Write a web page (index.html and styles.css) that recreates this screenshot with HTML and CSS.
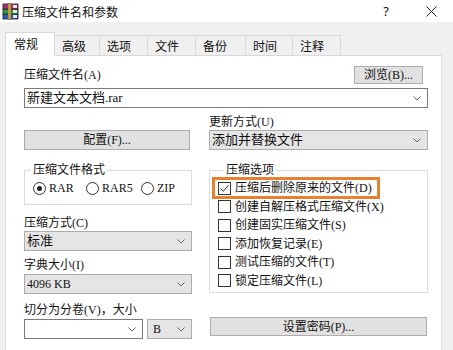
FILE: index.html
```html
<!DOCTYPE html>
<html lang="zh-CN">
<head>
    <meta charset="UTF-8">
    <title>压缩文件名和参数</title>
    <link rel="stylesheet" href="styles.css">
</head>
<body>
    <!-- Заголовок вікна -->
    <div class="titlebar">
        <svg class="app-icon" width="18" height="18" viewBox="0 0 18 18">
            <rect x="1" y="12" width="15" height="5" fill="#2f5cb8" stroke="#1a1a3a" stroke-width="0.8"/>
            <rect x="11" y="13" width="4" height="3" fill="#e8e8e8"/>
            <rect x="1" y="7" width="15" height="5" fill="#2e9a44" stroke="#12321a" stroke-width="0.8"/>
            <rect x="11" y="8" width="4" height="3" fill="#e8e8e8"/>
            <rect x="1" y="2" width="15" height="5" fill="#a3307a" stroke="#3a1030" stroke-width="0.8"/>
            <rect x="11" y="3" width="4" height="3" fill="#e8e8e8"/>
            <rect x="6" y="1.5" width="3" height="16" fill="#caa24c" stroke="#6b5320" stroke-width="0.5"/>
        </svg>
        <span class="title">压缩文件名和参数</span>
        <span class="tb-btn help">?</span>
        <span class="tb-btn close">
            <svg width="11" height="11" viewBox="0 0 11 11"><path d="M0.5 0.5 L10.5 10.5 M10.5 0.5 L0.5 10.5" stroke="#222" stroke-width="1"/></svg>
        </span>
    </div>

    <!-- Вкладки -->
    <div class="tabs">
        <div class="tab active" style="width:50px">常规</div>
        <div class="tab" style="width:46px">高级</div>
        <div class="tab" style="width:49px">选项</div>
        <div class="tab" style="width:49px">文件</div>
        <div class="tab" style="width:51px">备份</div>
        <div class="tab" style="width:48px">时间</div>
        <div class="tab" style="width:49px">注释</div>
    </div>

    <div class="panel">
        <div class="name-row">
            <span class="label">压缩文件名(A)</span>
            <button class="btn browse">浏览(B)...</button>
        </div>
        <div class="field combo wide">
            <span>新建文本文档.rar</span>
            <svg class="chev" width="8" height="5" viewBox="0 0 8 5"><path d="M0.5 0.5 L4 4 L7.5 0.5" fill="none" stroke="#666" stroke-width="1"/></svg>
        </div>

        <div class="cols">
            <div class="col left">
                <button class="btn config">配置(F)...</button>

                <fieldset class="group">
                    <legend>压缩文件格式</legend>
                    <div class="radios">
                        <span class="radio" style="width:53px"><i class="dot on"></i>RAR</span>
                        <span class="radio" style="width:55px"><i class="dot"></i>RAR5</span>
                        <span class="radio"><i class="dot"></i>ZIP</span>
                    </div>
                </fieldset>

                <div class="label method">压缩方式(C)</div>
                <div class="field select">
                    <span>标准</span>
                    <svg class="chev" width="8" height="5" viewBox="0 0 8 5"><path d="M0.5 0.5 L4 4 L7.5 0.5" fill="none" stroke="#666" stroke-width="1"/></svg>
                </div>

                <div class="label dict">字典大小(I)</div>
                <div class="field select">
                    <span class="latin">4096 KB</span>
                    <svg class="chev" width="8" height="5" viewBox="0 0 8 5"><path d="M0.5 0.5 L4 4 L7.5 0.5" fill="none" stroke="#666" stroke-width="1"/></svg>
                </div>

                <div class="label split">切分为分卷(V)，大小</div>
                <div class="split-row">
                    <div class="field combo vol">
                        <span></span>
                        <svg class="chev" width="8" height="5" viewBox="0 0 8 5"><path d="M0.5 0.5 L4 4 L7.5 0.5" fill="none" stroke="#666" stroke-width="1"/></svg>
                    </div>
                    <div class="field select unit">
                        <span class="latin">B</span>
                        <svg class="chev" width="8" height="5" viewBox="0 0 8 5"><path d="M0.5 0.5 L4 4 L7.5 0.5" fill="none" stroke="#666" stroke-width="1"/></svg>
                    </div>
                </div>
            </div>

            <div class="col right">
                <div class="label update">更新方式(U)</div>
                <div class="field select">
                    <span>添加并替换文件</span>
                    <svg class="chev" width="8" height="5" viewBox="0 0 8 5"><path d="M0.5 0.5 L4 4 L7.5 0.5" fill="none" stroke="#666" stroke-width="1"/></svg>
                </div>

                <fieldset class="group options">
                    <legend>压缩选项</legend>
                    <div class="highlight"></div>
                    <div class="check"><i class="box on"><svg width="11" height="11" viewBox="0 0 11 11"><path d="M1.5 5.5 L4.3 8.3 L9.5 2" fill="none" stroke="#333" stroke-width="1"/></svg></i>压缩后删除原来的文件(D)</div>
                    <div class="check"><i class="box"></i>创建自解压格式压缩文件(X)</div>
                    <div class="check"><i class="box"></i>创建固实压缩文件(S)</div>
                    <div class="check"><i class="box"></i>添加恢复记录(E)</div>
                    <div class="check"><i class="box"></i>测试压缩的文件(T)</div>
                    <div class="check"><i class="box"></i>锁定压缩文件(L)</div>
                </fieldset>

                <button class="btn password">设置密码(P)...</button>
            </div>
        </div>
    </div>
</body>
</html>
```

FILE: styles.css
```css
body {
    margin: 0; width: 453px; height: 350px; overflow: hidden;
    background: #f0f0f0; color: #111;
    font-family: "Liberation Serif", "Noto Sans CJK SC", serif; font-size: 12px;
}
/* Заголовок */
.titlebar { height: 22px; background: #fff; display: flex; align-items: center; }
.app-icon { margin-left: 2px; }
.title { margin-left: 2px; font-size: 12px; font-family: "Noto Sans CJK SC", sans-serif; }
.tb-btn { display: flex; justify-content: center; align-items: center; height: 22px; }
.help { margin-left: auto; width: 46px; font-family: "Noto Sans", sans-serif; font-size: 13px; }
.close { width: 44px; }
/* Вкладки */
.tabs { display: flex; align-items: flex-end; height: 33px; padding-left: 5px; }
.tab {
    box-sizing: border-box; height: 20px; padding-left: 7px; margin-right: -1px;
    border: 1px solid #d9d9d9; border-bottom: none; background: #f0f0f0;
    font-family: "Noto Sans CJK SC", sans-serif; font-size: 12px; line-height: 19px;
}
.tab.active { height: 24px; background: #fff; position: relative; z-index: 1; margin-bottom: -1px; line-height: 21px; padding-left: 8px; }
/* Панель */
.panel {
    margin-left: 5px; width: 437px; height: 300px; box-sizing: border-box;
    background: #fff; border: 1px solid #d9d9d9; border-bottom: none;
    padding: 10px 13px 0 18px;
}
.label { height: 16px; line-height: 16px; white-space: nowrap; }
.name-row { display: flex; justify-content: space-between; align-items: center; height: 18px; }
.btn {
    box-sizing: border-box; height: 20px; padding: 0; margin: 0;
    background: #e1e1e1; border: 1px solid #adadad; color: #111;
    font-family: inherit; font-size: 12px; line-height: 16px;
}
.browse { width: 69px; height: 18px; margin-right: 5px; }
.field {
    box-sizing: border-box; height: 20px; display: flex; align-items: center; justify-content: space-between;
    padding: 0 6px 0 2px; border: 1px solid #7a7a7a; background: #fff;
}
.field span { line-height: 16px; font-size: 13px; }
.field.select { background: #e5e5e5; border-color: #adadad; }
.wide { margin-top: 4px; width: 404px; }
.field .latin { font-size: 12px; }
.chev { flex: none; }
/* Колонки */
.cols { display: flex; gap: 17px; margin-top: 6px; }
.col { display: flex; flex-direction: column; }
.left { width: 168px; }
.right { width: 219px; }
.config { margin-top: 16px; width: 166px; }
/* Групи */
.group { margin: 12px 0 0; padding: 0; border: 1px solid #dcdcdc; min-width: 0; }
.group legend { margin-left: 6px; padding: 0 2px; line-height: 16px; }
.radios { display: flex; padding: 2px 0 8px 8px; }
.radio { display: flex; align-items: center; height: 16px; line-height: 16px; }
.dot {
    width: 11px; height: 11px; border: 1px solid #333; border-radius: 50%; margin-right: 3px;
    display: flex; justify-content: center; align-items: center;
}
.dot.on::after { content: ""; width: 5px; height: 5px; border-radius: 50%; background: #222; }
.method { margin-top: 10px; }
.dict { margin-top: 6px; }
.dict + .field { margin-top: 1px; }
.split { margin-top: 8px; }
.split-row { display: flex; gap: 4px; margin-top: 1px; }
.vol { width: 119px; }
.unit { width: 45px; padding-left: 5px; }
.update { margin-top: 0; }
.options { position: relative; padding: 1px 0 2px 8px; margin-top: 12px; }
.check { display: flex; align-items: center; height: 18.5px; line-height: 16px; white-space: nowrap; }
.box {
    box-sizing: border-box; width: 13px; height: 13px; border: 1px solid #333; margin-right: 4px;
    display: flex; justify-content: center; align-items: center;
}
.highlight {
    position: absolute; left: 2px; top: -1px; width: 168px; height: 22px; box-sizing: border-box;
    border: 3px solid #e6812f;
}
.password { margin-top: 24px; margin-left: 1px; width: 217px; height: 19px; }
```
